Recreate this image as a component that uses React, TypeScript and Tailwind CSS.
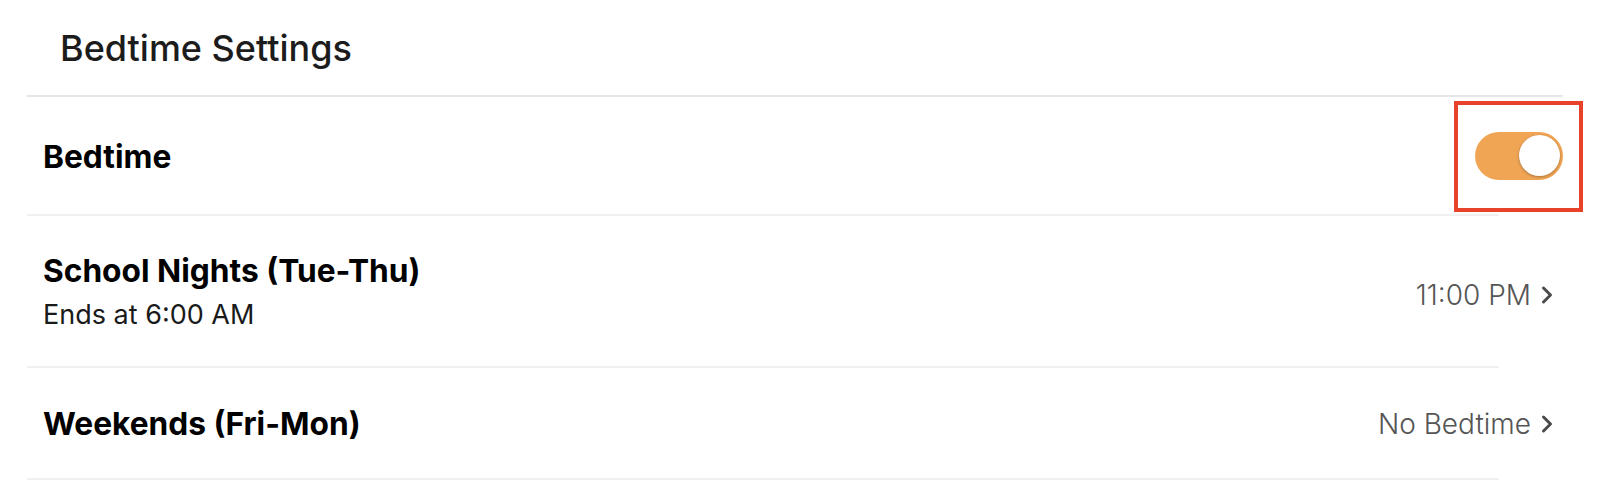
import { useState } from "react";

const Chevron = () => (
  <svg width="14" height="20" viewBox="0 0 14 20" className="ml-[9px]">
    <polyline
      points="3.5,3 10.5,10 3.5,17"
      fill="none"
      stroke="#4a4a4a"
      strokeWidth="3"
      strokeLinecap="round"
      strokeLinejoin="round"
    />
  </svg>
);

const Divider = ({ wide }: { wide?: boolean }) => (
  <div className={wide ? "h-[2px] w-[1536px] bg-[#e6e6e6]" : "h-[2px] w-[1472px] bg-[#f0f0f0]"} />
);

const Toggle = () => {
  const [on, setOn] = useState(true);
  return (
    <div className="relative">
      <button
        onClick={() => setOn(!on)}
        className={`flex h-[48px] w-[88px] items-center rounded-full px-[3px] ${
          on ? "justify-end bg-[#f0a555]" : "justify-start bg-[#d9d9d9]"
        }`}
      >
        <span className="size-[41px] rounded-full bg-white shadow-[0_1px_3px_rgba(0,0,0,0.3)]" />
      </button>
      {/* highlight annotation */}
      <div className="pointer-events-none absolute -left-[21px] -top-[31px] h-[111px] w-[129px] border-[4px] border-[#e8432a]" />
    </div>
  );
};

export default function App() {
  return (
    <div className="h-[480px] w-[1622px] bg-white font-['Inter',sans-serif] text-black">
      {/* header */}
      <div className="ml-[27px]">
        <div className="flex h-[95px] items-center pl-[33px]">
          <h1 className="text-[36px] font-medium text-[#1c1c1c]">Bedtime Settings</h1>
        </div>
        <Divider wide />

        <div className="flex h-[117px] w-[1536px] items-center justify-between pl-[16px]">
          <div className="mt-[2px] text-[31.7px] font-bold">Bedtime</div>
          <Toggle />
        </div>
        <Divider />

        <div className="flex h-[150px] w-[1536px] items-center justify-between pl-[16px] pr-[9px]">
          <div className="flex flex-col">
            <div className="text-[31.7px] leading-[38px] font-bold">School Nights (Tue-Thu)</div>
            <div className="mt-[9px] text-[27px] leading-[32px] font-normal text-[#1a1a1a]">Ends at 6:00 AM</div>
          </div>
          <div className="mt-[8px] flex items-center text-[28px] font-light text-[#555]">
            11:00 PM
            <Chevron />
          </div>
        </div>
        <Divider />

        <div className="flex h-[110px] w-[1536px] items-center justify-between pl-[16px] pr-[9px]">
          <div className="mt-[2px] text-[31.7px] font-bold">Weekends (Fri-Mon)</div>
          <div className="mt-[2px] flex items-center text-[28px] font-light text-[#555]">
            No Bedtime
            <Chevron />
          </div>
        </div>
        <Divider />
      </div>
    </div>
  );
}
